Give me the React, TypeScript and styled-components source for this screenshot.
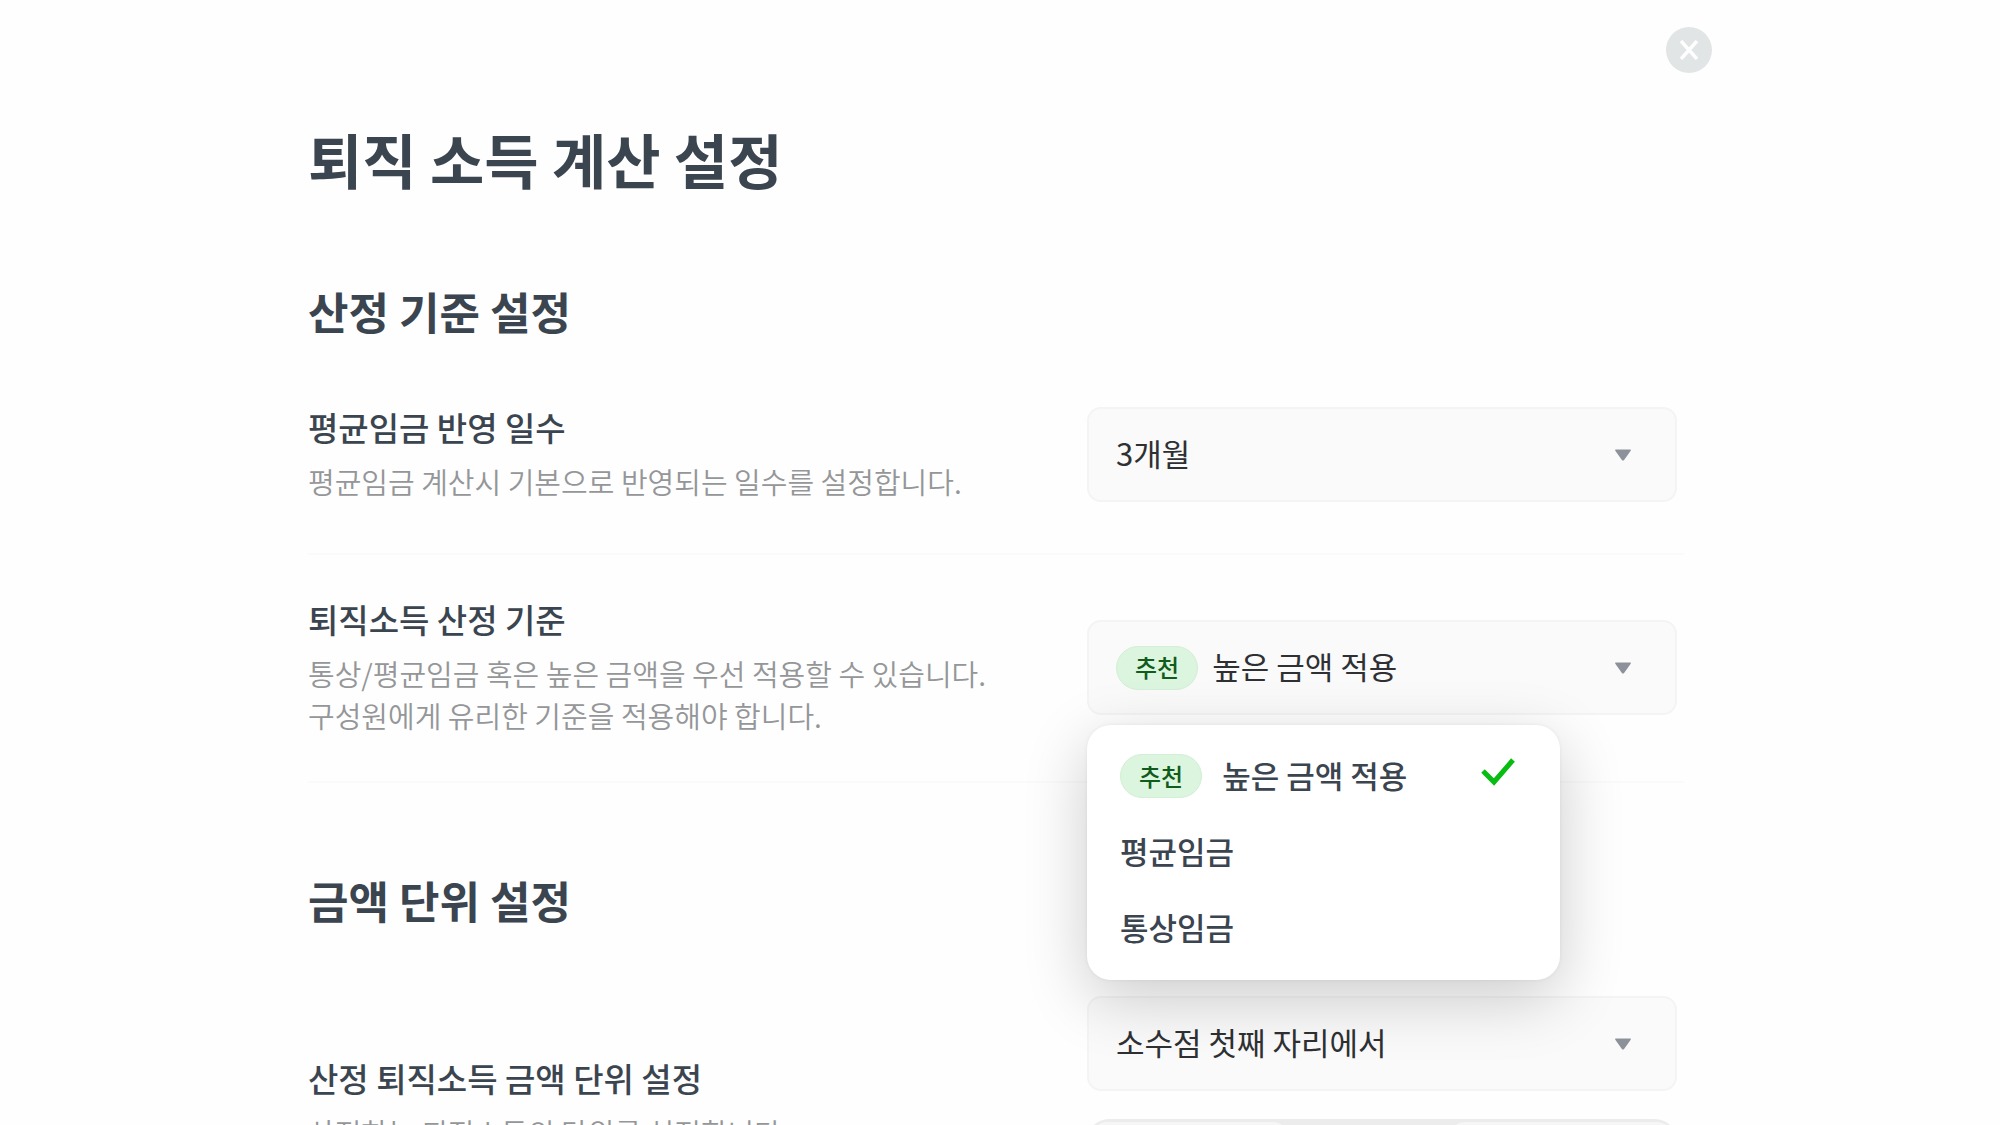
import React, { useState } from "react";
import styled, { createGlobalStyle } from "styled-components";

const GlobalStyle = createGlobalStyle`
  *, *::before, *::after { box-sizing: border-box; }
  body {
    margin: 0;
    background: #fefefe;
    color: #3b4550;
    font-family: "Noto Sans CJK KR", sans-serif;
  }
  h1, h2, p, ul { margin: 0; padding: 0; }
  button, select { font: inherit; color: inherit; }
`;

const Dialog = styled.main`
  height: 100vh;
  overflow: hidden;
  padding: 27px 288px 0 308px;
`;

const TopBar = styled.div`
  display: flex;
  justify-content: flex-end;
`;

const CloseButton = styled.button`
  display: grid;
  place-items: center;
  width: 46px;
  height: 46px;
  padding: 0;
  border: 0;
  border-radius: 50%;
  background: #e2e5e6;
  cursor: pointer;
`;

const Body = styled.div`
  padding: 38px 28px 0 0;
`;

const Title = styled.h1`
  font-size: 59px;
  line-height: 96px;
  font-weight: 700;
`;

const Section = styled.section<{ $top: number }>`
  padding-top: ${(p) => p.$top}px;
`;

const SectionTitle = styled.h2`
  font-size: 44px;
  line-height: 64px;
  font-weight: 700;
`;

const Row = styled.div<{ $top: number; $bottom: number; $line?: boolean }>`
  display: grid;
  grid-template-columns: minmax(0, 1fr) 590px;
  padding: ${(p) => p.$top}px 7px ${(p) => p.$bottom}px 0;
  border-bottom: ${(p) => (p.$line ? "2px solid #fafafa" : "0")};
`;

const Info = styled.div<{ $offset?: number }>`
  padding-top: ${(p) => p.$offset ?? 0}px;
`;

const Label = styled.label`
  display: block;
  font-size: 33px;
  line-height: 48px;
  font-weight: 500;
`;

const Description = styled.p`
  padding-top: 9px;
  font-size: 29px;
  line-height: 42px;
  font-weight: 350;
  color: #949698;
`;

const Controls = styled.div<{ $offset: number }>`
  display: flex;
  flex-direction: column;
  gap: 28px;
  padding-top: ${(p) => p.$offset}px;
`;

const Field = styled.div`
  position: relative;
  display: grid;
  align-items: center;
  > * { grid-area: 1 / 1; }
`;

const fieldBox = `
  width: 100%;
  height: 95px;
  border: 2px solid #f4f4f5;
  border-radius: 14px;
  background: #fafafa;
  color: #2e3033;
  font-size: 31px;
  font-weight: 400;
  text-align: left;
  cursor: pointer;
`;

const Select = styled.select`
  ${fieldBox}
  padding: 0 70px 4px 27px;
  appearance: none;
`;

const Combo = styled.button`
  ${fieldBox}
  display: flex;
  align-items: center;
  gap: 14px;
  padding: 0 70px 0 27px;
`;

const Caret = styled.svg`
  justify-self: end;
  margin-right: 45px;
  pointer-events: none;
`;

const Name = styled.span`
  padding-bottom: 4px;
`;

const Badge = styled.span`
  display: inline-flex;
  align-items: center;
  height: 44px;
  padding: 0 18px 2px;
  border: 1px solid #d3efd5;
  border-radius: 22px;
  background: #dcf5de;
  color: #0f5c1c;
  font-size: 24px;
  font-weight: 500;
`;

const Menu = styled.ul`
  position: absolute;
  z-index: 2;
  top: 105px;
  left: 0;
  width: 473px;
  padding: 13px 0 14px;
  border-radius: 24px;
  background: #fff;
  box-shadow: 0 0 4px rgba(0, 0, 0, 0.06), 0 18px 64px rgba(0, 0, 0, 0.2);
  list-style: none;
`;

const Option = styled.li`
  display: flex;
  align-items: center;
  gap: 20px;
  height: 76px;
  padding: 0 45px 0 33px;
  font-size: 31px;
  font-weight: 500;
  cursor: pointer;
`;

const Check = styled.svg`
  box-sizing: content-box;
  margin-left: auto;
  padding-bottom: 4px;
`;

const Segments = styled.div`
  display: grid;
  grid-template-columns: 200px 158px 1fr;
  height: 95px;
  padding: 3px;
  border-radius: 22px;
  background: #ececec;
`;

const Segment = styled.button<{ $active?: boolean }>`
  border: 0;
  border-radius: 18px;
  background: ${(p) => (p.$active ? "#ececec" : "#f6f6f6")};
  cursor: pointer;
`;

function CaretIcon() {
  return (
    <Caret width="18" height="14" viewBox="0 0 18 14" aria-hidden="true">
      <path d="M2 1.500h14q1.500 0 .7 1.200l-6.600 9.200q-1.100 1.100-2.200 0L1.300 2.700Q.5 1.500 2 1.500z" fill="#8d9199" />
    </Caret>
  );
}

function CheckIcon() {
  return (
    <Check width="34" height="34" viewBox="0 0 34 34" aria-hidden="true">
      <path d="M2 14l11 11L32 3" fill="none" stroke="#08bd12" strokeWidth="5" />
    </Check>
  );
}

const standards = [
  { name: "높은 금액 적용", recommended: true },
  { name: "평균임금", recommended: false },
  { name: "통상임금", recommended: false },
];

function StandardPicker() {
  const [open, setOpen] = useState(true);
  const [selected, setSelected] = useState(0);
  const current = standards[selected];
  return (
    <Field>
      <Combo
        type="button"
        id="standard"
        role="combobox"
        aria-labelledby="standard-label"
        aria-haspopup="listbox"
        aria-controls="standard-list"
        aria-expanded={open}
        onClick={() => setOpen(!open)}
      >
        {current.recommended && <Badge>추천</Badge>}
        <Name>{current.name}</Name>
      </Combo>
      <CaretIcon />
      {open && (
        <Menu id="standard-list" role="listbox" aria-labelledby="standard-label">
          {standards.map((item, i) => (
            <Option
              key={item.name}
              role="option"
              aria-selected={i === selected}
              onClick={() => {
                setSelected(i);
                setOpen(false);
              }}
            >
              {item.recommended && <Badge>추천</Badge>}
              <Name>{item.name}</Name>
              {i === selected && <CheckIcon />}
            </Option>
          ))}
        </Menu>
      )}
    </Field>
  );
}

export default function App() {
  return (
    <Dialog>
      <GlobalStyle />
      <TopBar>
        <CloseButton type="button" aria-label="닫기">
          <svg width="20" height="20" viewBox="0 0 20 20" aria-hidden="true">
            <path d="M2 1l16 18M18 1L2 19" stroke="#fff" strokeWidth="3.400" />
          </svg>
        </CloseButton>
      </TopBar>
      <Body>
        <Title>퇴직 소득 계산 설정</Title>
        <Section $top={72}>
          <SectionTitle>산정 기준 설정</SectionTitle>
          <Row $top={60} $bottom={51} $line>
            <Info>
              <Label htmlFor="days">평균임금 반영 일수</Label>
              <Description>평균임금 계산시 기본으로 반영되는 일수를 설정합니다.</Description>
            </Info>
            <Controls $offset={4}>
              <Field>
                <Select id="days">
                  <option>3개월</option>
                </Select>
                <CaretIcon />
              </Field>
            </Controls>
          </Row>
          <Row $top={40} $bottom={45} $line>
            <Info>
              <Label htmlFor="standard" id="standard-label">퇴직소득 산정 기준</Label>
              <Description>
                통상/평균임금 혹은 높은 금액을 우선 적용할 수 있습니다.
                <br />
                구성원에게 유리한 기준을 적용해야 합니다.
              </Description>
            </Info>
            <Controls $offset={25}>
              <StandardPicker />
            </Controls>
          </Row>
        </Section>
        <Section $top={85}>
          <SectionTitle>금액 단위 설정</SectionTitle>
          <Row $top={60} $bottom={51}>
            <Info $offset={62}>
              <Label htmlFor="digit">산정 퇴직소득 금액 단위 설정</Label>
              <Description>산정하는 퇴직소득의 단위를 설정합니다.</Description>
            </Info>
            <Controls $offset={4}>
              <Field>
                <Select id="digit">
                  <option>소수점 첫째 자리에서</option>
                </Select>
                <CaretIcon />
              </Field>
              <Segments role="group" aria-label="단수 처리">
                <Segment type="button" aria-label="올림" />
                <Segment type="button" aria-label="반올림" aria-pressed="true" $active />
                <Segment type="button" aria-label="버림" />
              </Segments>
            </Controls>
          </Row>
        </Section>
      </Body>
    </Dialog>
  );
}
